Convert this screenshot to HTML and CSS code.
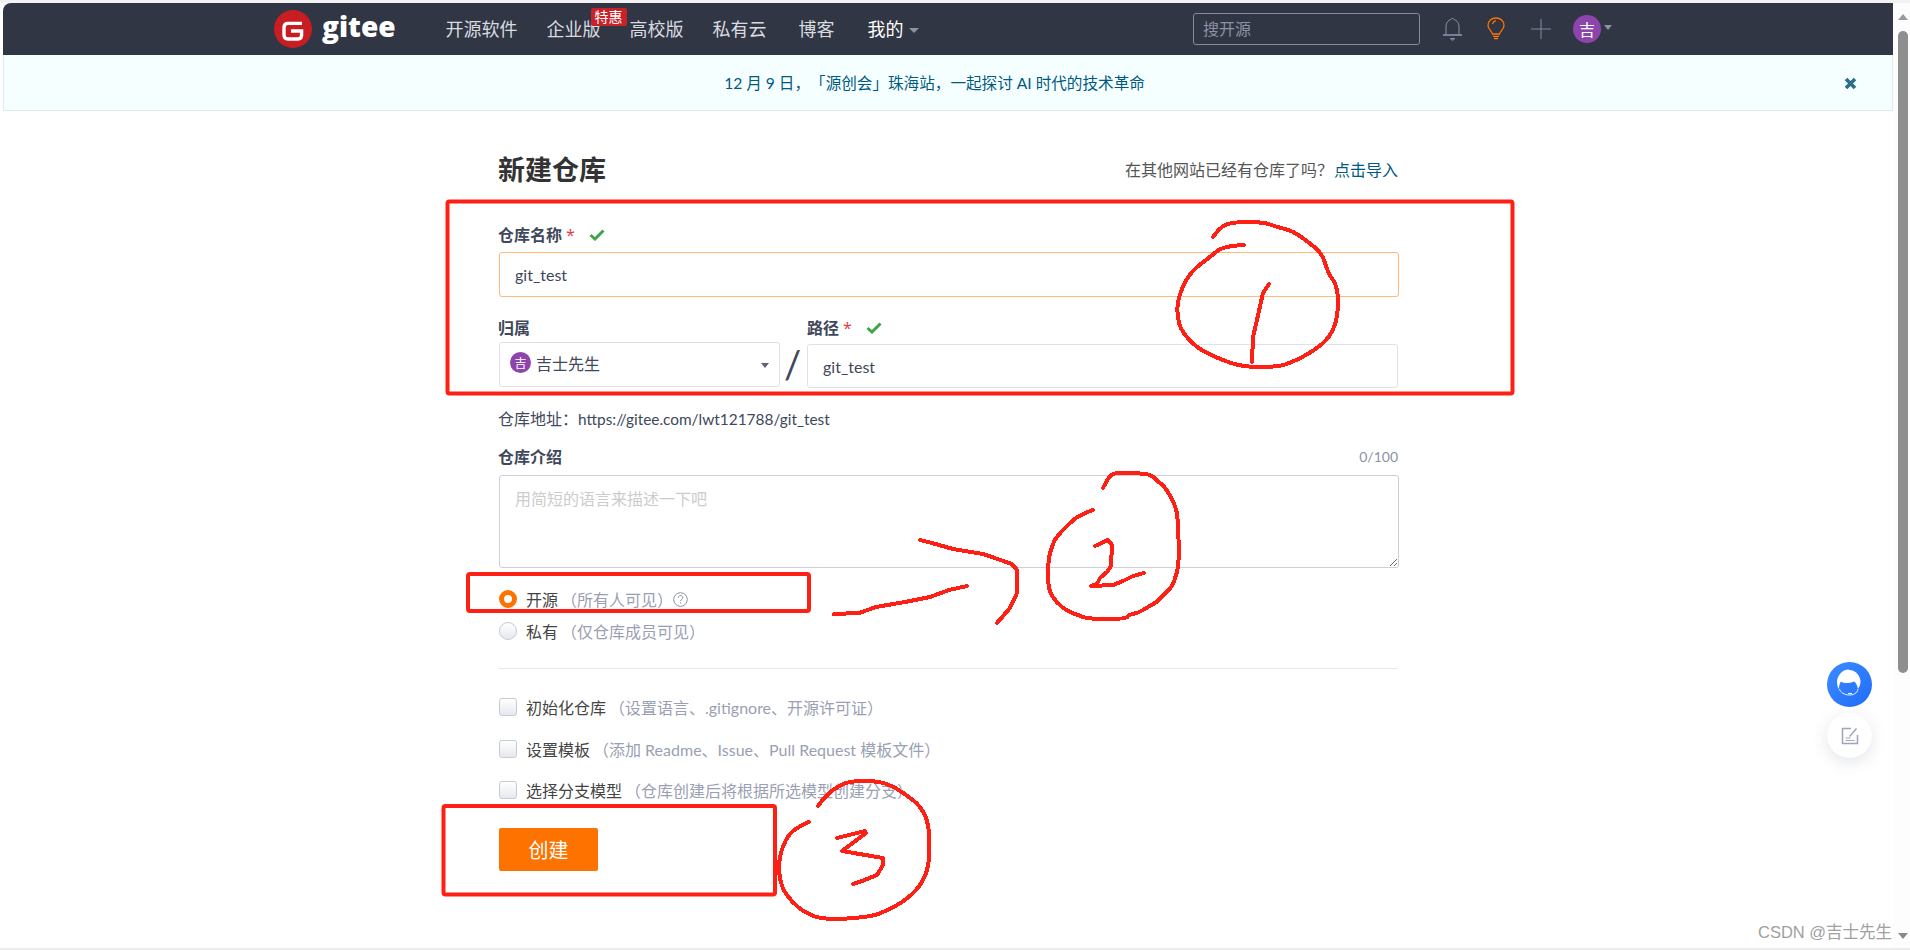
FILE: index.html
```html
<!DOCTYPE html>
<html lang="zh-CN">
<head>
<meta charset="utf-8">
<title>新建仓库 - Gitee</title>
<link rel="stylesheet" href="styles.css">
</head>
<body>
<div class="shell">
  <div class="viewport">
    <header class="topbar">
      <a class="logo">
        <svg class="logo-mark" width="38" height="38" viewBox="0 0 38 38"><circle cx="19" cy="19" r="19" fill="#c71d23"/><path d="M28 13.400H14c-2.500 0-4 1.500-4 4v7.600c0 2.500 1.500 4 4 4h10c2.500 0 3.600-1.500 3.600-4v-4H17" fill="none" stroke="#fff" stroke-width="3.400"/></svg>
        <span class="logo-text">gitee</span>
      </a>
      <nav class="nav">
        <a>开源软件</a>
        <a class="nav-promo">企业版<span class="badge">特惠</span></a>
        <a>高校版</a>
        <a>私有云</a>
        <a class="nav-blog">博客</a>
        <a class="nav-mine">我的<i class="caret"></i></a>
      </nav>
      <div class="tools">
        <div class="search">搜开源</div>
        <svg class="tool-bell" width="19" height="24" viewBox="0 0 19 24" fill="none" stroke="#8a93ad" stroke-width="1"><path d="M3 17.500V9.500C3 5.500 5.500 3 8 2.500 8.200 1 10.800 1 11 2.500 13.500 3 16 5.500 16 9.500V17.500"/><path d="M0 18h19" stroke-width="1.600"/><path d="M7.500 21.500h4l-1 1.500h-2z"/></svg>
        <svg class="tool-bulb" width="20" height="24" viewBox="0 0 20 24" fill="none" stroke="#fe7300" stroke-width="1.300"><path d="M6.500 17C6 14 2 12.500 2 8.500 2 4 5.500 1 10 1s8 3 8 7.500c0 4-4 5.500-4.500 8.500z"/><path d="M6.500 7C7 5.200 8.500 4 10 3.700"/><path d="M7 19.300h6M8 21.500h4"/></svg>
        <svg class="tool-plus" width="20" height="20" viewBox="0 0 20 20" stroke="#7f879e" stroke-width="1.100"><path d="M10 0v20M0 10h20"/></svg>
        <span class="avatar avatar-lg">吉</span>
        <i class="caret caret-user"></i>
      </div>
    </header>

    <div class="banner">
      <span class="banner-text">12 月 9 日，「源创会」珠海站，一起探讨 AI 时代的技术革命</span>
      <svg class="banner-close" width="13" height="13" viewBox="0 0 13 13" stroke="#2b6f8a" stroke-width="3.600"><path d="M2 2l9 9M11 2l-9 9"/></svg>
    </div>

    <main class="content">
      <div class="title-row">
        <h1 class="title">新建仓库</h1>
        <div class="import">在其他网站已经有仓库了吗？<a class="link">点击导入</a></div>
      </div>

      <div class="label label-first">仓库名称<span class="req">*</span>
        <svg class="check" width="16" height="12" viewBox="0 0 16 12" fill="none" stroke="#3fa548" stroke-width="3"><path d="M1.500 6l4.500 4L14.500 1.500"/></svg>
      </div>
      <input class="field field-focus" value="git_test" readonly>

      <div class="owner-row">
        <div class="owner-col">
          <div class="label">归属</div>
          <div class="select"><span class="avatar avatar-sm">吉</span><span>吉士先生</span><i class="select-caret"></i></div>
        </div>
        <span class="slash">/</span>
        <div class="path-col">
          <div class="label">路径<span class="req">*</span>
            <svg class="check" width="16" height="12" viewBox="0 0 16 12" fill="none" stroke="#3fa548" stroke-width="3"><path d="M1.500 6l4.500 4L14.500 1.500"/></svg>
          </div>
          <input class="field field-path" value="git_test" readonly>
        </div>
      </div>

      <div class="address">仓库地址：<span class="url">https://gitee.com/lwt121788/git_test</span></div>

      <div class="desc-head"><span class="label">仓库介绍</span><span class="counter">0/100</span></div>
      <textarea class="desc" placeholder="用简短的语言来描述一下吧"></textarea>

      <div class="radios">
        <label class="option"><input class="radio" type="radio" name="vis" checked><span class="opt-name">开源</span><span class="hint">（所有人可见）</span>
          <svg class="help" width="15" height="15" viewBox="0 0 15 15" fill="none" stroke="#8c92a4"><circle cx="7.500" cy="7.500" r="6.800"/><path d="M5.300 5.800c0-3 4.500-3 4.500-.2 0 1.700-2.200 1.600-2.200 3.500"/><path d="M7.600 10.300v1.300"/></svg>
        </label>
        <label class="option"><input class="radio" type="radio" name="vis"><span class="opt-name">私有</span><span class="hint">（仅仓库成员可见）</span></label>
      </div>

      <hr class="divider">

      <div class="checks">
        <label class="option"><input class="box" type="checkbox"><span class="opt-name">初始化仓库</span><span class="hint">（设置语言、.gitignore、开源许可证）</span></label>
        <label class="option"><input class="box" type="checkbox"><span class="opt-name">设置模板</span><span class="hint">（添加 Readme、Issue、Pull Request 模板文件）</span></label>
        <label class="option"><input class="box" type="checkbox"><span class="opt-name">选择分支模型</span><span class="hint">（仓库创建后将根据所选模型创建分支）</span></label>
      </div>

      <button class="submit" type="button">创建</button>
    </main>

    <div class="float float-service">
      <svg width="45" height="45" viewBox="0 0 45 45"><path d="M22 8C30 8 33.500 15 33.500 20c0 3-1.500 5-2.500 7-1-4-2-6.500-4-7.500-5 2-10 2-13 0-1.500 2-2 4.500-2 7.500-1.500-2-2-4.500-2-7 0-6 5-12.500 12-12.500z" fill="#fff"/><path d="M12.500 27c1.500 7 17 9 18.500 0" fill="none" stroke="#fff" stroke-width=".9"/><path d="M21 31.500h4" stroke="#fff" stroke-width="1"/></svg>
    </div>
    <div class="float float-note">
      <svg width="18" height="18" viewBox="0 0 18 18" fill="none" stroke="#a0a5bd" stroke-width="1.500"><path d="M10 1.500H1.500v15h15V8"/><path d="M8.500 9.500L15.500 1.500"/><path d="M4.500 11h5M4.500 13.500h9" stroke-width="1.100"/></svg>
    </div>
  </div>

  <div class="scrollbar">
    <i class="arrow-up"></i>
    <div class="thumb"></div>
    <i class="arrow-down"></i>
  </div>
</div>

<div class="watermark">CSDN @吉士先生</div>

<svg class="ink" width="1910" height="950" viewBox="0 0 1910 950">
  <rect class="ink-box" x="447.500" y="201.500" width="1065" height="192" rx="2"/>
  <rect class="ink-box" x="468" y="574" width="341" height="37" rx="2"/>
  <rect class="ink-box" x="443.500" y="806" width="331.500" height="88.500" rx="2"/>
  <path d="M1213 237Q1220 227 1226.500 224.500Q1233 222 1248 222Q1263 222 1270 224.500Q1277 227 1285 229Q1293 231 1300.500 236.500Q1308 242 1315 247.500Q1322 253 1325 263Q1328 273 1333 280Q1338 287 1338 302Q1338 317 1334 327Q1330 337 1322.500 343.500Q1315 350 1304 356Q1293 362 1285 364.500Q1277 367 1259.500 367Q1242 367 1229.500 362.500Q1217 358 1207 353Q1197 348 1189.500 340Q1182 332 1179.500 324.500Q1177 317 1177.500 307Q1178 297 1184 284.500Q1190 272 1200 264.500Q1210 257 1216.500 251.500Q1223 246 1244 245"/>
  <polyline points="1269,284 1263,293 1257,320 1253,337 1252,362"/>
  <polyline points="834,614 859,613 876,607 905,602 930,597 949,590 967,586"/>
  <polyline points="920,540 932,543 953,549 983,554 1012,564 1017,570 1017,593 1010,608 997,623"/>
  <path d="M1103 488Q1107 480 1109.500 477Q1112 474 1115 473.500Q1118 473 1128 473Q1138 473 1145 474Q1152 475 1154.500 478Q1157 481 1160 483Q1163 485 1165.500 488.500Q1168 492 1171.500 498.500Q1175 505 1176.500 511.500Q1178 518 1178.500 539Q1179 560 1178 566.500Q1177 573 1174.500 580Q1172 587 1167.500 591Q1163 595 1160 598.500Q1157 602 1152.500 604.500Q1148 607 1143 610Q1138 613 1133 614Q1128 615 1127.500 617Q1127 619 1107.500 619Q1088 619 1083 617Q1078 615 1072.500 613Q1067 611 1062 607Q1057 603 1052.500 596.500Q1048 590 1048 575Q1048 560 1050.500 551.500Q1053 543 1055.500 539Q1058 535 1065.500 527.500Q1073 520 1077.500 517Q1082 514 1093 510"/>
  <polyline points="1095,546 1108,540 1112,545 1111,566 1107,572 1100,578 1097,584 1091,586 1113,585 1123,581 1133,576 1144,573"/>
  <path d="M818 806Q826 795 833 790Q840 785 846 783Q852 781 865 781Q878 781 886.500 784Q895 787 902.500 792.500Q910 798 914.500 801.500Q919 805 923.500 812.500Q928 820 929 833.500Q930 847 929 858.500Q928 870 923.500 879Q919 888 911 895Q903 902 895.500 906Q888 910 879.500 913.500Q871 917 847 918.500Q823 920 813.500 916Q804 912 798 907Q792 902 786.500 894.500Q781 887 779.500 874.500Q778 862 781.500 851Q785 840 790 834Q795 828 809 822"/>
  <polyline points="837,838 865,831 866,833 842,851 883,858 883,865 877,875 862,881 853,884"/>
</svg>
</body>
</html>
```
FILE: styles.css
```css
* { box-sizing: border-box; }

html, body {
  margin: 0;
  height: 950px;
  overflow: hidden;
  background: #fff;
}

body {
  position: relative;
  font-family: "Lato", "Noto Sans CJK SC", sans-serif;
  font-size: 16px;
  color: #40485b;
  text-spacing-trim: space-all;
}

.shell {
  display: flex;
  height: 950px;
  border-top: 3px solid #f2f2f2;
  border-bottom: 2px solid #ececec;
}

.viewport {
  position: relative;
  flex: 1;
  margin-left: 3px;
  min-width: 0;
}

/* top bar */
.topbar {
  display: flex;
  align-items: center;
  height: 52px;
  padding-left: 271px;
  padding-right: 281px;
  background: #303643;
  border-top-left-radius: 8px;
  color: #d9dbe0;
}

.logo { display: flex; align-items: center; gap: 10px; }
.logo-mark { display: block; }
.logo-text {
  font-family: "Open Sans", sans-serif;
  font-size: 28px;
  font-weight: 800;
  line-height: 38px;
  color: #fff;
  position: relative;
  top: -3px;
}

.nav {
  display: flex;
  align-items: center;
  gap: 29px;
  margin-left: 50px;
  font-size: 18px;
  line-height: 24px;
}
.nav a { display: block; white-space: nowrap; }
.nav-promo { position: relative; }
.nav .nav-blog { margin-left: 3px; }
.nav .nav-mine { margin-left: 4px; color: #fff; display: flex; align-items: center; }
.badge {
  position: absolute;
  left: 44px;
  top: -9px;
  width: 36px;
  height: 18px;
  background: #c7222a;
  border-radius: 2px;
  color: #fff;
  font-size: 14px;
  line-height: 18px;
  text-align: center;
}

.caret {
  display: block;
  width: 0;
  height: 0;
  margin-left: 5px;
  margin-top: 3px;
  border-left: 5px solid transparent;
  border-right: 5px solid transparent;
  border-top: 5px solid #8c92a4;
}

.tools { display: flex; align-items: center; margin-left: auto; }
.search {
  width: 227px;
  height: 32px;
  padding-left: 9px;
  margin-right: 23px;
  border: 1px solid #868b9a;
  border-radius: 3px;
  color: #8c92a4;
  line-height: 30px;
}
.tool-bell { margin-right: 24px; display: block; }
.tool-bulb { margin-right: 25px; display: block; }
.tool-plus { margin-right: 22px; display: block; }
.caret-user { margin-left: 3px; margin-top: -3px; border-left-width: 4.500px; border-right-width: 4.500px; }

.avatar {
  display: flex;
  align-items: center;
  justify-content: center;
  flex: none;
  background: #8e44ad;
  border-radius: 50%;
  color: #fff;
}
.avatar-lg { width: 28px; height: 28px; font-size: 16px; }
.avatar-sm { width: 21px; height: 21px; font-size: 12px; }

/* banner */
.banner {
  position: relative;
  display: flex;
  justify-content: center;
  height: 56px;
  padding-right: 27px;
  background: #f6ffff;
  border: 1px solid #e3e9ed;
  border-top: 0;
}
.banner-text { color: #005980; font-size: 15.600px; line-height: 56px; }
.banner-close { position: absolute; right: 35px; top: 22px; }

/* form */
.content {
  width: 900px;
  margin: 0 auto;
  padding-top: 39px;
}

.title-row {
  display: flex;
  align-items: center;
  justify-content: space-between;
  height: 40px;
}
.title {
  margin: 0;
  font-size: 27px;
  font-weight: 700;
  line-height: 40px;
  color: #333;
}
.import { color: #555; line-height: 24px; }
.link { color: #005980; margin-left: 1px; }

.label {
  display: block;
  font-weight: 700;
  line-height: 24px;
  color: #40485b;
}
.label-first { margin-top: 33px; }
.req { margin-left: 4px; color: #e3393c; font-family: "Open Sans", sans-serif; font-weight: 400; }
.check { margin-left: 10px; }

.field {
  display: block;
  width: 900px;
  height: 45px;
  margin-left: 1px;
  padding: 0 15px;
  border: 1px solid #dee2e8;
  border-radius: 3px;
  background: #fff;
  color: #40485b;
  font: inherit;
  outline: none;
}
.field-focus { margin-top: 5px; border-color: #ffb77a; }
.field-path { margin: 4px 0 0; height: 44px; width: 591px; }

.owner-row { display: flex; margin-top: 19px; }
.owner-col { width: 282px; flex: none; }
.path-col { flex: 1; min-width: 0; margin-left: 2px; }

.select {
  display: flex;
  align-items: center;
  gap: 5px;
  position: relative;
  height: 45px;
  margin: 2px 0 0 1px;
  padding: 0 0 4px 10px;
  border: 1px solid #dee2e8;
  border-radius: 3px;
  color: #40485b;
}
.select-caret {
  position: absolute;
  right: 10px;
  top: 20px;
  width: 0;
  height: 0;
  border-left: 4px solid transparent;
  border-right: 4px solid transparent;
  border-top: 5px solid #5d6475;
}

.slash {
  display: block;
  width: 25px;
  flex: none;
  padding-top: 26px;
  font-size: 38px;
  font-weight: 400;
  line-height: 44px;
  text-align: center;
  color: #40485b;
}

.address { margin-top: 19px; line-height: 24px; }
.url { font-size: 15.400px; }

.desc-head {
  display: flex;
  justify-content: space-between;
  margin-top: 14px;
  line-height: 24px;
}
.counter { color: #8c92a4; font-size: 14px; }

.desc {
  display: block;
  width: 900px;
  height: 93px;
  margin: 6px 0 0 1px;
  padding: 11px 15px;
  border: 1px solid #cdcfdc;
  border-radius: 3px;
  font: inherit;
  line-height: 24px;
  resize: vertical;
  outline: none;
}
.desc::placeholder { color: #ccc; }

.radios { display: flex; flex-direction: column; gap: 8px; margin-top: 19px; }
.checks { display: flex; flex-direction: column; gap: 17.500px; margin-top: 26px; }

.option {
  display: flex;
  align-items: center;
  height: 24px;
  white-space: nowrap;
}
.opt-name { color: #444; }
.hint { margin-left: 3px; color: #9a9fb3; }

.radio, .box {
  appearance: none;
  flex: none;
  width: 18px;
  height: 18px;
  margin: 0 9px 0 1px;
  border: 1px solid #c8cad6;
  background: linear-gradient(#fff, #e6e8ee);
}
.radio { border-radius: 50%; }
.radio:checked { border: 5px solid #fe7300; background: #fff; }
.box { border-radius: 3px; }

.divider {
  height: 1px;
  margin: 25px 0 0;
  border: 0;
  background: #e3e9ed;
}

.submit {
  display: block;
  width: 99px;
  height: 43px;
  margin: 26px 0 0 1px;
  border: 0;
  border-radius: 2px;
  background: #fe7300;
  color: #fff;
  font: inherit;
  font-size: 20px;
}

/* floating buttons */
.float {
  position: absolute;
  display: flex;
  align-items: center;
  justify-content: center;
  border-radius: 50%;
}
.float-service {
  left: 1824px;
  top: 659px;
  width: 45px;
  height: 45px;
  background: linear-gradient(135deg, #3d8bff, #1f6dfb);
}
.float-note {
  left: 1824px;
  top: 710px;
  width: 45px;
  height: 45px;
  background: #fff;
  box-shadow: 0 4px 16px rgba(60, 70, 100, .14);
}

/* scrollbar */
.scrollbar {
  position: relative;
  flex: none;
  width: 17px;
  background: #fdfdfd;
}
.thumb {
  position: absolute;
  left: 5px;
  top: 28px;
  width: 10px;
  height: 642px;
  background: #8e8e8e;
  border-radius: 5px;
}
.arrow-up, .arrow-down {
  position: absolute;
  left: 5px;
  width: 0;
  height: 0;
  border-left: 5px solid transparent;
  border-right: 5px solid transparent;
}
.arrow-up { top: 11px; border-bottom: 6px solid #9a9a9a; }
.arrow-down { top: 930px; border-top: 6px solid #8a8a8a; }

/* annotations and watermark */
.watermark {
  position: absolute;
  left: 1758px;
  top: 921px;
  font-family: "Liberation Sans", "Noto Sans CJK SC", sans-serif;
  font-size: 16.500px;
  line-height: 22px;
  color: #a0a0a0;
  white-space: nowrap;
}

.ink {
  position: absolute;
  left: 0;
  top: 0;
  fill: none;
  stroke: #ff2015;
  stroke-width: 4;
  stroke-linejoin: round;
  stroke-linecap: round;
  shape-rendering: crispEdges;
  pointer-events: none;
}
.ink-box { shape-rendering: auto; }
```
